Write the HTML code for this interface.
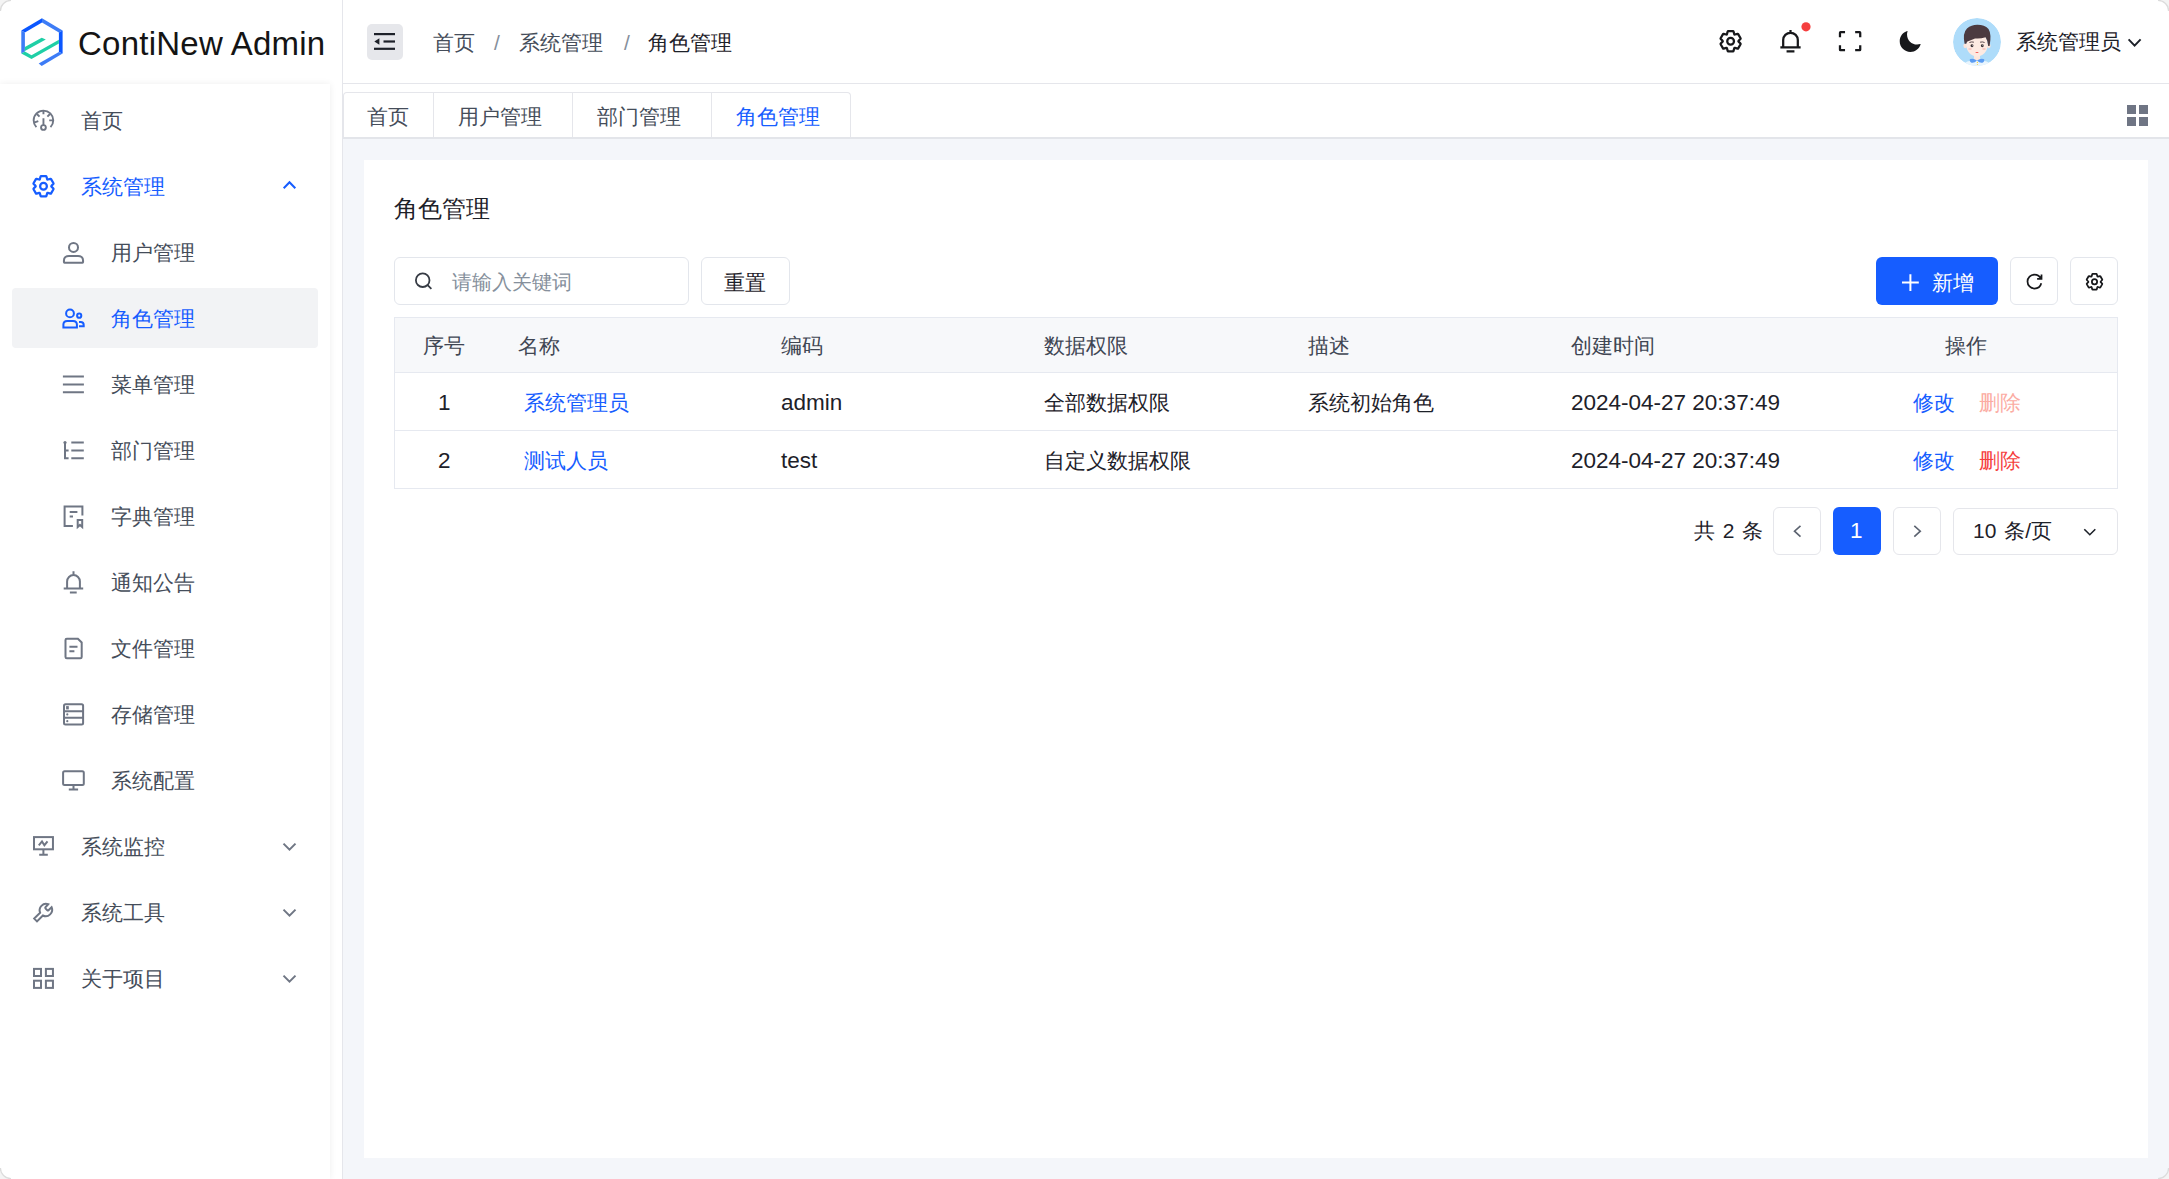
<!DOCTYPE html>
<html><head><meta charset="utf-8">
<style>
*{box-sizing:border-box;margin:0;padding:0}
html,body{width:2169px;height:1179px;overflow:hidden;background:#fff;font-family:"Liberation Sans",sans-serif;color:#1d2129}
.a{position:absolute}
.t{position:absolute;white-space:nowrap;line-height:30px;font-size:21px}
svg.i{position:absolute;overflow:visible}
</style></head><body>

<!-- sidebar panel -->
<div class="a" style="left:0;top:84px;width:330px;height:1095px;background:#fff;box-shadow:0 0 7px rgba(0,0,0,0.07)"></div>
<div class="a" style="left:342px;top:0;width:1px;height:1179px;background:#e5e6eb"></div>
<!-- header bottom border -->
<div class="a" style="left:343px;top:83px;width:1826px;height:1px;background:#e5e6eb"></div>

<!-- content bg -->
<div class="a" style="left:343px;top:139px;width:1826px;height:1040px;background:#f4f6fa"></div>
<!-- tabs bar -->
<div class="a" style="left:343px;top:137px;width:1826px;height:2px;background:#e3e5ea"></div>
<!-- card -->
<div class="a" style="left:364px;top:160px;width:1784px;height:998px;background:#fff"></div>

<!-- ===== LOGO ===== -->
<svg class="i" style="left:0;top:0" width="80" height="80" viewBox="0 0 80 80">
  <polygon points="42,18.3 21.3,30.4 24.9,32.6 42,22.6" fill="#0b57ff"/>
  <polygon points="42,18.3 62.6,30.4 58.9,32.6 42,22.6" fill="#3d7cf6"/>
  <polygon points="21.3,30.4 24.9,32.6 24.9,51.6 21.3,53.5" fill="#3d7cf6"/>
  <polygon points="62.6,30.4 58.9,32.6 58.9,51.9 62.6,53.5" fill="#0b57ff"/>
  <polygon points="38.7,63.5 58.9,51.9 62.6,53.5 41.7,66" fill="#3d7cf6"/>
  <polygon points="21.3,53.5 31.5,59.1 58.9,43.6 58.9,39.8 31.5,55.2 24.9,51.6" fill="#1fcfa6"/>
  <polygon points="24.9,46.9 41.7,37.8 45.8,39.5 24.9,51.1" fill="#1fcfa6"/>
</svg>
<div class="t" style="left:78px;top:19px;font-size:33px;line-height:50px;color:#141414;letter-spacing:0.25px">ContiNew Admin</div>

<!-- ===== HEADER ===== -->
<div class="a" style="left:367px;top:24px;width:36px;height:36px;border-radius:5px;background:#e6e7eb"></div>
<svg class="i" style="left:0;top:0" width="1" height="1">
  <g stroke="#1d2129" stroke-width="2.2" fill="none">
    <line x1="374" y1="34.1" x2="395" y2="34.1"/>
    <line x1="383.5" y1="41.5" x2="395" y2="41.5"/>
    <line x1="374" y1="48.8" x2="395" y2="48.8"/>
  </g>
  <polygon points="374.3,41.5 379.4,38.3 379.4,44.7" fill="#1d2129"/>
</svg>
<div class="t" style="left:433px;top:28px;color:#454d5a">首页</div>
<div class="t" style="left:494px;top:28px;color:#86909c">/</div>
<div class="t" style="left:519px;top:28px;color:#454d5a">系统管理</div>
<div class="t" style="left:624px;top:28px;color:#86909c">/</div>
<div class="t" style="left:648px;top:28px;color:#1d2129">角色管理</div>

<div class="t" style="left:2016px;top:27px;color:#1d2129">系统管理员</div>

<!-- ===== SIDEBAR MENU ===== -->
<div class="a" style="left:12px;top:288px;width:306px;height:60px;border-radius:4px;background:#f2f3f5"></div>
<div class="t" style="left:81px;top:106px;color:#454d5a">首页</div>
<div class="t" style="left:81px;top:172px;color:#165dff">系统管理</div>
<div class="t" style="left:111px;top:238px;color:#454d5a">用户管理</div>
<div class="t" style="left:111px;top:304px;color:#165dff">角色管理</div>
<div class="t" style="left:111px;top:370px;color:#454d5a">菜单管理</div>
<div class="t" style="left:111px;top:436px;color:#454d5a">部门管理</div>
<div class="t" style="left:111px;top:502px;color:#454d5a">字典管理</div>
<div class="t" style="left:111px;top:568px;color:#454d5a">通知公告</div>
<div class="t" style="left:111px;top:634px;color:#454d5a">文件管理</div>
<div class="t" style="left:111px;top:700px;color:#454d5a">存储管理</div>
<div class="t" style="left:111px;top:766px;color:#454d5a">系统配置</div>
<div class="t" style="left:81px;top:832px;color:#454d5a">系统监控</div>
<div class="t" style="left:81px;top:898px;color:#454d5a">系统工具</div>
<div class="t" style="left:81px;top:964px;color:#454d5a">关于项目</div>

<!-- ===== TABS ===== -->
<div class="a" style="left:343px;top:92px;width:508px;height:45px;border:1px solid #e5e6eb;border-bottom:none;border-radius:4px 4px 0 0;background:#fff"></div>
<div class="a" style="left:433px;top:93px;width:1px;height:44px;background:#e5e6eb"></div>
<div class="a" style="left:572px;top:93px;width:1px;height:44px;background:#e5e6eb"></div>
<div class="a" style="left:711px;top:93px;width:1px;height:44px;background:#e5e6eb"></div>
<div class="t" style="left:367px;top:102px;color:#454d5a">首页</div>
<div class="t" style="left:458px;top:102px;color:#454d5a">用户管理</div>
<div class="t" style="left:597px;top:102px;color:#454d5a">部门管理</div>
<div class="t" style="left:736px;top:102px;color:#165dff">角色管理</div>
<div class="a" style="left:2127px;top:105px;width:9px;height:9px;background:#6f7584"></div>
<div class="a" style="left:2139px;top:105px;width:9px;height:9px;background:#6f7584"></div>
<div class="a" style="left:2127px;top:117px;width:9px;height:9px;background:#6f7584"></div>
<div class="a" style="left:2139px;top:117px;width:9px;height:9px;background:#6f7584"></div>

<!-- ===== CARD ===== -->
<div class="t" style="left:394px;top:194px;font-size:24px;color:#1d2129">角色管理</div>

<div class="a" style="left:394px;top:257px;width:295px;height:48px;border:1px solid #e3e6ec;border-radius:6px"></div>
<div class="t" style="left:452px;top:267px;font-size:19.5px;color:#86909c">请输入关键词</div>
<div class="a" style="left:701px;top:257px;width:89px;height:48px;border:1px solid #e3e6ec;border-radius:6px"></div>
<div class="t" style="left:724px;top:268px;color:#1d2129">重置</div>

<div class="a" style="left:1876px;top:257px;width:122px;height:48px;border-radius:6px;background:#165dff"></div>
<div class="t" style="left:1932px;top:268px;color:#fff">新增</div>
<div class="a" style="left:2010px;top:257px;width:48px;height:48px;border:1px solid #e3e6ec;border-radius:6px"></div>
<div class="a" style="left:2070px;top:257px;width:48px;height:48px;border:1px solid #e3e6ec;border-radius:6px"></div>

<!-- table -->
<div class="a" style="left:394px;top:317px;width:1724px;height:172px;border:1px solid #e6e9f0"></div>
<div class="a" style="left:395px;top:318px;width:1722px;height:54px;background:#f7f8fa"></div>
<div class="a" style="left:395px;top:372px;width:1722px;height:1px;background:#e6e9f0"></div>
<div class="a" style="left:395px;top:430px;width:1722px;height:1px;background:#e6e9f0"></div>

<div class="t" style="left:423px;top:331px;color:#3f4653">序号</div>
<div class="t" style="left:518px;top:331px;color:#3f4653">名称</div>
<div class="t" style="left:781px;top:331px;color:#3f4653">编码</div>
<div class="t" style="left:1044px;top:331px;color:#3f4653">数据权限</div>
<div class="t" style="left:1308px;top:331px;color:#3f4653">描述</div>
<div class="t" style="left:1571px;top:331px;color:#3f4653">创建时间</div>
<div class="t" style="left:1945px;top:331px;color:#3f4653">操作</div>

<div class="t" style="left:438px;top:388px;font-size:22.5px;color:#1d2129">1</div>
<div class="t" style="left:524px;top:388px;color:#165dff">系统管理员</div>
<div class="t" style="left:781px;top:388px;font-size:22.5px;color:#1d2129">admin</div>
<div class="t" style="left:1044px;top:388px;color:#1d2129">全部数据权限</div>
<div class="t" style="left:1308px;top:388px;color:#1d2129">系统初始角色</div>
<div class="t" style="left:1571px;top:388px;font-size:22.5px;color:#1d2129">2024-04-27 20:37:49</div>
<div class="t" style="left:1913px;top:388px;color:#165dff">修改</div>
<div class="t" style="left:1979px;top:388px;color:#fbaca3">删除</div>

<div class="t" style="left:438px;top:446px;font-size:22.5px;color:#1d2129">2</div>
<div class="t" style="left:524px;top:446px;color:#165dff">测试人员</div>
<div class="t" style="left:781px;top:446px;font-size:22.5px;color:#1d2129">test</div>
<div class="t" style="left:1044px;top:446px;color:#1d2129">自定义数据权限</div>
<div class="t" style="left:1571px;top:446px;font-size:22.5px;color:#1d2129">2024-04-27 20:37:49</div>
<div class="t" style="left:1913px;top:446px;color:#165dff">修改</div>
<div class="t" style="left:1979px;top:446px;color:#f53f3f">删除</div>

<!-- pagination -->
<div class="t" style="left:1694px;top:516px;color:#1d2129;word-spacing:2px">共 2 条</div>
<div class="a" style="left:1773px;top:507px;width:48px;height:48px;border:1px solid #e5e6eb;border-radius:6px"></div>
<div class="a" style="left:1833px;top:507px;width:48px;height:48px;border-radius:6px;background:#165dff"></div>
<div class="t" style="left:1850px;top:516px;font-size:22.5px;color:#fff">1</div>
<div class="a" style="left:1893px;top:507px;width:48px;height:48px;border:1px solid #e5e6eb;border-radius:6px"></div>
<div class="a" style="left:1953px;top:508px;width:165px;height:47px;border:1px solid #e5e6eb;border-radius:6px"></div>
<div class="t" style="left:1973px;top:516px;color:#1d2129;word-spacing:2px">10 条/页</div>

<!-- ===== ICON OVERLAY ===== -->
<svg class="a" style="left:0;top:0" width="2169" height="1179" viewBox="0 0 2169 1179" fill="none" stroke-linecap="butt" stroke-linejoin="miter">
  <!-- header icons (arco 48 paths @0.5625) -->
  <g stroke="#17181b" stroke-width="4">
    <g transform="translate(1717.1 27.7) scale(0.5625)">
      <path d="M18.797 6.732A1 1 0 0 1 19.76 6h8.48a1 1 0 0 1 .964.732l1.285 4.628a1 1 0 0 0 1.213.7l4.651-1.2a1 1 0 0 1 1.116.468l4.24 7.344a1 1 0 0 1-.153 1.2L38.193 23.3a1 1 0 0 0 0 1.402l3.364 3.427a1 1 0 0 1 .153 1.2l-4.24 7.344a1 1 0 0 1-1.116.468l-4.65-1.2a1 1 0 0 0-1.214.7l-1.285 4.628a1 1 0 0 1-.964.732h-8.48a1 1 0 0 1-.963-.732L17.51 36.64a1 1 0 0 0-1.213-.7l-4.65 1.2a1 1 0 0 1-1.116-.468l-4.24-7.344a1 1 0 0 1 .153-1.2L9.809 24.7a1 1 0 0 0 0-1.402l-3.364-3.427a1 1 0 0 1-.153-1.2l4.24-7.344a1 1 0 0 1 1.116-.468l4.65 1.2a1 1 0 0 0 1.213-.7l1.286-4.628Z"/>
      <path d="M30 24a6 6 0 1 1-12 0 6 6 0 0 1 12 0Z"/>
    </g>
    <g transform="translate(1777 27.7) scale(0.5625)">
      <path d="M24 9c7.18 0 13 5.82 13 13v13H11V22c0-7.18 5.82-13 13-13Zm0 0V4M6 35h36M17 42h14"/>
    </g>
    <g transform="translate(1836.6 27.7) scale(0.5625)">
      <path d="M42 17V9a1 1 0 0 0-1-1h-8M6 17V9a1 1 0 0 1 1-1h8m27 23v8a1 1 0 0 1-1 1h-8M6 31v8a1 1 0 0 0 1 1h8"/>
    </g>
    <g transform="translate(1896.9 27.7) scale(0.5625)">
      <path fill="#17181b" stroke="none" d="M42.108 29.769c.124-.387-.258-.736-.645-.613A17.99 17.99 0 0 1 36 30c-9.941 0-18-8.059-18-18 0-1.904.296-3.74.844-5.463.123-.387-.226-.768-.613-.645C10.558 8.334 5 15.523 5 24c0 10.493 8.507 19 19 19 8.477 0 15.666-5.558 18.108-13.231Z"/>
    </g>
  </g>
  <circle cx="1806" cy="26.8" r="4.6" fill="#f53f3f"/>
  <polyline points="2128.6,39.4 2134.6,45.6 2140.6,39.4" stroke="#1d2129" stroke-width="2"/>

  <!-- avatar -->
  <clipPath id="av"><circle cx="1977" cy="42" r="24"/></clipPath>
  <g clip-path="url(#av)">
    <circle cx="1977" cy="42" r="24" fill="#aedcfa"/>
    <path d="M1961 67 Q1964.5 60 1977 60 Q1989.5 60 1993 67 Z" fill="#eaf5fd"/>
    <rect x="1974" y="53" width="6" height="7.5" fill="#fde6dc"/>
    <ellipse cx="1965.2" cy="45.8" rx="1.8" ry="2.4" fill="#fde3d9"/>
    <ellipse cx="1988.8" cy="45.8" rx="1.8" ry="2.4" fill="#fde3d9"/>
    <ellipse cx="1977" cy="44.6" rx="10.8" ry="11.9" fill="#fdeae2"/>
    <path d="M1964.6 43.8 Q1962.4 33 1967 28.5 Q1971.5 24.7 1977.5 24.8 Q1984.5 24.8 1988.5 29 Q1991.8 34 1989.6 46 L1988.2 46 Q1987.8 40.5 1985.6 37.2 Q1980 39 1975 38.4 Q1971.5 40 1967.4 41.6 Q1966.6 42.6 1966.3 43.8 Z" fill="#4b3a40"/>
    <path d="M1969.4 42.5 Q1971.6 41.5 1973.9 42.2 M1980.1 42.2 Q1982.4 41.5 1984.6 42.5" stroke="#4b3a40" stroke-width="0.9" fill="none"/>
    <circle cx="1972" cy="45.7" r="1.45" fill="#3b3236"/>
    <circle cx="1982.3" cy="45.7" r="1.45" fill="#3b3236"/>
    <circle cx="1972.5" cy="45.2" r="0.45" fill="#fff"/>
    <circle cx="1982.8" cy="45.2" r="0.45" fill="#fff"/>
    <ellipse cx="1970" cy="49" rx="1.8" ry="1" fill="#f9c9c4"/>
    <ellipse cx="1984" cy="49" rx="1.8" ry="1" fill="#f9c9c4"/>
    <path d="M1975.1 52 H1978.9 Q1977 54.2 1975.1 52 Z" fill="#f0524f"/>
    <path d="M1969.8 59.3 Q1973 57.8 1977 60.5 Q1974 63.5 1971 62.5 Q1969.3 61.5 1969.8 59.3 Z M1984.2 59.3 Q1981 57.8 1977 60.5 Q1980 63.5 1983 62.5 Q1984.7 61.5 1984.2 59.3 Z" fill="#5b9cf2"/>
    <circle cx="1977.4" cy="62.4" r="0.6" fill="#f5d142"/>
    <circle cx="1977.4" cy="64.5" r="0.6" fill="#f5d142"/>
  </g>

  <!-- sidebar icons -->
  <g stroke="#6f7684" stroke-width="2">
    <!-- dashboard -->
    <path d="M36.4 127.2 A9.8 9.8 0 1 1 50.5 127.2" stroke-width="1.9"/>
    <path d="M43.45 110.6 V114.3 M36.9 114.0 L39.5 116.6 M33.9 122.7 L38.3 121.2 M49.2 120.4 H53.1 M47.4 116.6 L50.0 114.0 M43.45 118.2 V125" stroke-width="1.9"/>
    <circle cx="43.45" cy="127.5" r="2.4" stroke-width="1.9"/>
    <!-- user -->
    <g transform="translate(60 239.6) scale(0.5625)" stroke-width="3.6">
      <path d="M7 37c0-4.97 4.03-8 9-8h16c4.97 0 9 3.03 9 8v3a1 1 0 0 1-1 1H8a1 1 0 0 1-1-1v-3Z"/>
      <path d="M32 14a8 8 0 1 1-16 0 8 8 0 0 1 16 0Z"/>
    </g>
    <!-- menu -->
    <path d="M62.9 376.6 H83.9 M62.9 384.5 H83.9 M62.9 392.3 H83.9"/>
    <!-- mind mapping -->
    <path d="M65 442.5 V458.3 H68.6 M65 450.4 H68.6 M71.3 442.6 H83.8 M71.3 450.4 H83.8 M71.3 458.3 H83.8"/>
    <circle cx="65" cy="442.6" r="1.6" fill="#6f7684" stroke="none"/>
    <!-- bookmark -->
    <path d="M72.9 526 H64.6 V506.4 H82.4 V515.5 M69.7 511.9 H77.4 M69.7 516.4 H73"/>
    <path d="M77.7 527 V520.1 H82.2 V527 L79.95 524.9 Z"/>
    <!-- bell -->
    <path d="M67.1 588.5 V581.5 A6.4 6.4 0 0 1 73.5 575.1 A6.4 6.4 0 0 1 79.9 581.5 V588.5 M73.5 571.3 V575.1 M63.7 588.5 H83.2 M69.9 592.6 H76.7"/>
    <!-- file -->
    <path d="M77.9 638.7 H66.9 Q65.5 638.7 65.5 640.1 V656.9 Q65.5 658.3 66.9 658.3 H80.3 Q81.7 658.3 81.7 656.9 V642.5 Z M69.4 646.8 H77.5 M69.4 651.3 H74.4"/>
    <!-- storage -->
    <rect x="64" y="704.2" width="19.1" height="20.3" rx="1.5"/>
    <path d="M64 711.2 H83.1 M64 717.7 H83.1"/>
    <g fill="#6f7684" stroke="none"><rect x="66.1" y="706.1" width="2.7" height="3.3"/><circle cx="67.3" cy="714.4" r="1.1"/><circle cx="67.3" cy="721.2" r="1.1"/></g>
    <!-- desktop -->
    <rect x="63.1" y="771.3" width="20.7" height="13.6" rx="1.5"/>
    <path d="M73.5 784.9 V789.5 M68.8 789.5 H78.1"/>
    <!-- monitor -->
    <rect x="34" y="837.1" width="18.95" height="12.2"/>
    <polyline points="38.8,845.3 42,841.4 44.4,845.2 47.5,841.4"/>
    <path d="M43.4 849.3 V854.8 M39.2 854.8 H47.8"/>
    <!-- tool -->
    <path d="M48.2 904.3 L45.4 907.3 Q45 908 45.6 908.6 L47.3 910.3 Q47.9 910.8 48.5 910.3 L51.6 907.2 A6.4 6.4 0 0 1 42.9 915.5 L37 921.4 L34.2 918.6 L40.1 912.7 A6.4 6.4 0 0 1 48.2 904.3 Z"/>
    <!-- apps -->
    <rect x="34" y="968.9" width="7" height="7.1"/>
    <rect x="45.9" y="968.9" width="7.05" height="7.1"/>
    <rect x="34" y="980.7" width="7" height="7.2"/>
    <rect x="45.9" y="980.7" width="7.05" height="7.2"/>
    <!-- chevrons -->
    <polyline points="283.5,843.6 289.5,849.6 295.5,843.6"/>
    <polyline points="283.5,909.6 289.5,915.6 295.5,909.6"/>
    <polyline points="283.5,975.6 289.5,981.6 295.5,975.6"/>
  </g>
  <g stroke="#165dff" stroke-width="2">
    <g transform="translate(30 172.7) scale(0.5625)" stroke-width="4">
      <path d="M18.797 6.732A1 1 0 0 1 19.76 6h8.48a1 1 0 0 1 .964.732l1.285 4.628a1 1 0 0 0 1.213.7l4.651-1.2a1 1 0 0 1 1.116.468l4.24 7.344a1 1 0 0 1-.153 1.2L38.193 23.3a1 1 0 0 0 0 1.402l3.364 3.427a1 1 0 0 1 .153 1.2l-4.24 7.344a1 1 0 0 1-1.116.468l-4.65-1.2a1 1 0 0 0-1.214.7l-1.285 4.628a1 1 0 0 1-.964.732h-8.48a1 1 0 0 1-.963-.732L17.51 36.64a1 1 0 0 0-1.213-.7l-4.65 1.2a1 1 0 0 1-1.116-.468l-4.24-7.344a1 1 0 0 1 .153-1.2L9.809 24.7a1 1 0 0 0 0-1.402l-3.364-3.427a1 1 0 0 1-.153-1.2l4.24-7.344a1 1 0 0 1 1.116-.468l4.65 1.2a1 1 0 0 0 1.213-.7l1.286-4.628Z"/>
      <path d="M30 24a6 6 0 1 1-12 0 6 6 0 0 1 12 0Z"/>
    </g>
    <polyline points="283.7,188.2 289.5,182.2 295.3,188.2"/>
    <!-- user group -->
    <circle cx="70" cy="313.4" r="3.9"/>
    <circle cx="79.2" cy="315.7" r="2.1"/>
    <path d="M63.4 327.5 V324.6 Q63.4 320.9 67.2 320.9 H73.1 Q76.9 320.9 76.9 324.6 V327.5 Z"/>
    <path d="M79 321.9 H80.6 Q83.7 321.9 83.7 325 V326.3 H79"/>
  </g>

  <!-- card icons -->
  <g stroke="#363b44" stroke-width="1.8">
    <circle cx="422.7" cy="280.2" r="6.8"/>
    <path d="M427.6 285.1 L431.4 288.9"/>
  </g>
  <path d="M1902 282.6 H1918.8 M1910.4 274.3 V291" stroke="#fff" stroke-width="2"/>
  <g stroke="#17181b" stroke-width="4">
    <g transform="translate(2024 271) scale(0.4375)">
      <path d="M38.837 18C36.463 12.136 30.715 8 24 8 15.163 8 8 15.163 8 24s7.163 16 16 16c7.455 0 13.72-5.1 15.496-12M40 8v10H30"/>
    </g>
    <g transform="translate(2084 271.3) scale(0.4375)">
      <path d="M18.797 6.732A1 1 0 0 1 19.76 6h8.48a1 1 0 0 1 .964.732l1.285 4.628a1 1 0 0 0 1.213.7l4.651-1.2a1 1 0 0 1 1.116.468l4.24 7.344a1 1 0 0 1-.153 1.2L38.193 23.3a1 1 0 0 0 0 1.402l3.364 3.427a1 1 0 0 1 .153 1.2l-4.24 7.344a1 1 0 0 1-1.116.468l-4.65-1.2a1 1 0 0 0-1.214.7l-1.285 4.628a1 1 0 0 1-.964.732h-8.48a1 1 0 0 1-.963-.732L17.51 36.64a1 1 0 0 0-1.213-.7l-4.65 1.2a1 1 0 0 1-1.116-.468l-4.24-7.344a1 1 0 0 1 .153-1.2L9.809 24.7a1 1 0 0 0 0-1.402l-3.364-3.427a1 1 0 0 1-.153-1.2l4.24-7.344a1 1 0 0 1 1.116-.468l4.65 1.2a1 1 0 0 0 1.213-.7l1.286-4.628Z"/>
      <path d="M30 24a6 6 0 1 1-12 0 6 6 0 0 1 12 0Z"/>
    </g>
  </g>
  <g stroke="#5c6370" stroke-width="1.6">
    <polyline points="1800.5,525.8 1794.5,531.2 1800.5,536.6"/>
    <polyline points="1914.3,525.8 1920.3,531.2 1914.3,536.6"/>
    <polyline points="2084.3,529.2 2089.8,534.7 2095.3,529.2" stroke="#1d2129"/>
  </g>
</svg>


<!-- window corners -->
<svg class="a" style="left:0;top:0" width="2169" height="1179" viewBox="0 0 2169 1179">
  <g fill="#f4f4f4">
    <path d="M0 0 H11 A11 11 0 0 0 0 11 Z"/>
    <path d="M2169 0 V11 A11 11 0 0 0 2158 0 Z"/>
    <path d="M0 1179 V1168 A11 11 0 0 0 11 1179 Z"/>
    <path d="M2169 1179 H2158 A11 11 0 0 0 2169 1168 Z"/>
  </g>
  <g fill="none" stroke="#dcdcdc" stroke-width="1.3">
    <path d="M11 0.4 A10.6 10.6 0 0 0 0.4 11"/>
    <path d="M2158 0.4 A10.6 10.6 0 0 1 2168.6 11"/>
    <path d="M0.4 1168 A10.6 10.6 0 0 0 11 1178.6"/>
    <path d="M2158 1178.6 A10.6 10.6 0 0 0 2168.6 1168"/>
  </g>
</svg>
</body></html>
